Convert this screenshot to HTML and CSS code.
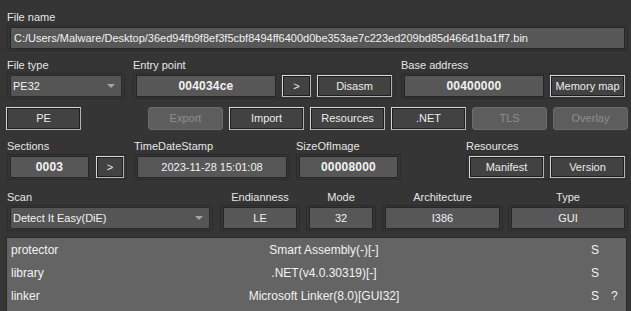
FILE: index.html
```html
<!DOCTYPE html>
<html lang="en">

<head>
    <meta charset="UTF-8">
    <title>Detect It Easy</title>
    <link rel="stylesheet" href="styles.css">
</head>

<body>
    <div class="app">
        <!-- file name -->
        <div class="grp">
            <div class="lbl">File name</div>
            <div class="frame">
                <div class="field left full">C:/Users/Malware/Desktop/36ed94fb9f8ef3f5cbf8494ff6400d0be353ae7c223ed209bd85d466d1ba1ff7.bin</div>
            </div>
        </div>

        <!-- type / entry / base -->
        <div class="row r1">
            <div class="grp">
                <div class="lbl">File type</div>
                <div class="frame">
                    <div class="combo w112">PE32<span class="arrow"></span></div>
                </div>
            </div>
            <div class="grp">
                <div class="lbl">Entry point</div>
                <div class="frame">
                    <div class="field bold w140">004034ce</div>
                    <div class="btn w29">&gt;</div>
                    <div class="btn">Disasm</div>
                </div>
            </div>
            <div class="grp">
                <div class="lbl">Base address</div>
                <div class="frame">
                    <div class="field bold w140">00400000</div>
                    <div class="btn">Memory map</div>
                </div>
            </div>
        </div>

        <!-- tools -->
        <div class="row r2">
            <div class="btn pe">PE</div>
            <div class="btn off">Export</div>
            <div class="btn">Import</div>
            <div class="btn">Resources</div>
            <div class="btn">.NET</div>
            <div class="btn off">TLS</div>
            <div class="btn off">Overlay</div>
        </div>

        <!-- sections / time / size / resources -->
        <div class="row r3">
            <div class="grp">
                <div class="lbl">Sections</div>
                <div class="frame gap7">
                    <div class="field bold w79">0003</div>
                    <div class="btn w28">&gt;</div>
                </div>
            </div>
            <div class="grp">
                <div class="lbl">TimeDateStamp</div>
                <div class="frame">
                    <div class="field w150">2023-11-28 15:01:08</div>
                </div>
            </div>
            <div class="grp">
                <div class="lbl">SizeOfImage</div>
                <div class="frame">
                    <div class="field bold w99">00008000</div>
                </div>
            </div>
            <div class="grp push">
                <div class="lbl">Resources</div>
                <div class="frame">
                    <div class="btn">Manifest</div>
                    <div class="btn">Version</div>
                </div>
            </div>
        </div>

        <!-- scan -->
        <div class="row r4">
            <div class="grp">
                <div class="lbl">Scan</div>
                <div class="frame">
                    <div class="combo w200">Detect It Easy(DiE)<span class="arrow"></span></div>
                </div>
            </div>
            <div class="grp">
                <div class="lbl center">Endianness</div>
                <div class="frame">
                    <div class="field w74">LE</div>
                </div>
            </div>
            <div class="grp">
                <div class="lbl center">Mode</div>
                <div class="frame">
                    <div class="field w64">32</div>
                </div>
            </div>
            <div class="grp">
                <div class="lbl center">Architecture</div>
                <div class="frame">
                    <div class="field w115">I386</div>
                </div>
            </div>
            <div class="grp">
                <div class="lbl center">Type</div>
                <div class="frame">
                    <div class="field w114">GUI</div>
                </div>
            </div>
        </div>

        <!-- result -->
        <div class="results">
            <div class="res-row">
                <span class="c1">protector</span>
                <span class="c2">Smart Assembly(-)[-]</span>
                <span class="c3">S</span>
                <span class="c4"></span>
            </div>
            <div class="res-row">
                <span class="c1">library</span>
                <span class="c2">.NET(v4.0.30319)[-]</span>
                <span class="c3">S</span>
                <span class="c4"></span>
            </div>
            <div class="res-row">
                <span class="c1">linker</span>
                <span class="c2">Microsoft Linker(8.0)[GUI32]</span>
                <span class="c3">S</span>
                <span class="c4">?</span>
            </div>
        </div>
    </div>
</body>

</html>
```

FILE: styles.css
```css
body,
html {
    margin: 0;
    height: 100%;
    overflow: hidden;
    background-color: #353535;
    font-family: "Liberation Sans", Arial, sans-serif;
    font-size: 11px;
    color: #e6e6e6;
}

.app {
    width: 621px;
    padding: 11px 0 0 7px;
}

.row {
    display: flex;
}

.lbl {
    height: 13px;
    line-height: 13px;
    margin-bottom: 1px;
    white-space: nowrap;
}

.lbl.center {
    text-align: center;
}

.frame {
    display: flex;
    gap: 6px;
    border: 1px solid #2b2b2b;
    border-radius: 2px;
    padding: 1px 2px;
}

.frame.gap7 {
    gap: 7px;
}

.field {
    height: 22px;
    box-sizing: border-box;
    border: 1px solid #262626;
    background-color: #575757;
    line-height: 20px;
    text-align: center;
    color: #f2f2f2;
    white-space: nowrap;
    overflow: hidden;
}

.field.left {
    text-align: left;
    padding-left: 3px;
}

.field.full {
    width: 615px;
}

.field.bold {
    font-weight: bold;
    font-size: 12px;
    letter-spacing: 0.2px;
}

.w64 { width: 64px; }
.w74 { width: 74px; }
.w79 { width: 79px; }
.w99 { width: 99px; }
.w112 { width: 112px; }
.w114 { width: 114px; }
.w115 { width: 115px; }
.w140 { width: 140px; }
.w150 { width: 150px; }
.w200 { width: 200px; }

.btn {
    width: 75px;
    height: 22px;
    box-sizing: border-box;
    background-color: #424242;
    border: 1px solid #d8d8d8;
    border-right-color: #b4b4b4;
    border-bottom-color: #b4b4b4;
    box-shadow: inset 0 0 0 1px #1e1e1e;
    color: #ececec;
    text-align: center;
    line-height: 20px;
    white-space: nowrap;
}

.btn.w29 { width: 29px; }
.btn.w28 { width: 28px; }

.btn.off {
    background-color: #5d5d5d;
    border: 1px solid #6b6b6b;
    border-radius: 3px;
    box-shadow: none;
    color: #8e8e8e;
}

.combo {
    display: flex;
    align-items: center;
    height: 22px;
    box-sizing: border-box;
    padding-left: 2px;
    background-color: #555555;
    border: 1px solid #2a2a2a;
    border-radius: 2px;
    color: #f2f2f2;
}

.arrow {
    margin-left: auto;
    margin-right: 6px;
    border-left: 4px solid transparent;
    border-right: 4px solid transparent;
    border-top: 4px solid #a4a4a4;
}

/* row spacing */
.r1 {
    margin-top: 8px;
}

.r1 .grp + .grp {
    margin-left: 8px;
}

.r1 .grp:last-child {
    margin-left: 6px;
}

.r2 {
    margin-top: 8px;
    gap: 6px;
}

.r2 .btn {
    height: 23px;
    line-height: 21px;
}

.btn.pe {
    margin-left: -1px;
    margin-right: 61px;
}

.r3 {
    margin-top: 10px;
}

.r3 .grp:nth-child(2) {
    margin-left: 7px;
}

.r3 .grp:nth-child(3) {
    margin-left: 6px;
}

.push {
    margin-left: auto;
}

.r4 {
    margin-top: 11px;
    gap: 6px;
}

.r4 .grp:nth-child(2) {
    margin-left: 1px;
}

.r4 .grp:last-child {
    margin-left: -1px;
}

.results {
    margin: 6px 0 0 -1px;
    width: 621px;
    height: 74px;
    box-sizing: border-box;
    padding-top: 1px;
    background-color: #646464;
    border: 1px solid #2a2a2a;
    border-bottom: none;
    color: #f2f2f2;
    font-size: 12px;
}

.res-row {
    display: flex;
    height: 23px;
    line-height: 23px;
}

.c1 {
    width: 56px;
    padding-left: 4px;
}

.c2 {
    width: 514px;
    text-align: center;
    white-space: nowrap;
}

.c3 {
    width: 10px;
    padding-left: 10px;
}

.c4 {
    width: 14px;
    padding-left: 10px;
}
```
